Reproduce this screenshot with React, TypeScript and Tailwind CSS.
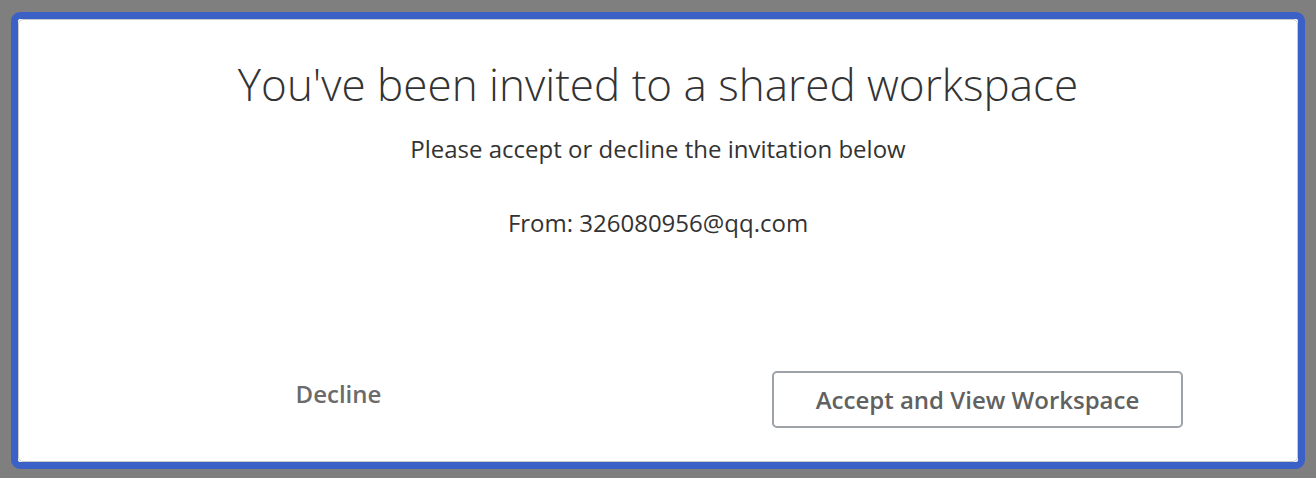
import React from 'react';

const font = { fontFamily: '"Open Sans", "Noto Sans", sans-serif' };

const InviteDialog: React.FC = () => {
  return (
    <div className="rounded-[9px] border-[7px] border-[#3b61c6] bg-white">
      <div className="flex h-[443px] flex-col rounded-[5px] border border-[#c9c9c9] bg-white text-center">
        {/* Header */}
        <h1 className="mt-[36px] text-[44px] font-light leading-[56px] text-[#333]">
          You've been invited to a shared workspace
        </h1>
        <p className="mt-[22px] text-[24px] leading-[30px] text-[#333]">
          Please accept or decline the invitation below
        </p>
        <p className="mt-[44px] text-[24px] leading-[30px] text-[#333]">From: 326080956@qq.com</p>

        {/* Actions */}
        <div className="mt-auto mb-[33px] grid grid-cols-2 items-center">
          <div className="flex justify-center">
            <button className="-mt-[12px] text-[24px] font-semibold text-[#6b6b6b]">Decline</button>
          </div>
          <div className="flex justify-center">
            <button className="h-[57px] w-[411px] rounded-[5px] border-2 border-[#9ea3a9] text-[24px] font-semibold text-[#616161]">
              Accept and View Workspace
            </button>
          </div>
        </div>
      </div>
    </div>
  );
};

export default function App() {
  return (
    <div className="h-[478px] w-[1316px] bg-[#7f7f7f] px-[11px] pt-[12px]" style={font}>
      <InviteDialog />
    </div>
  );
}
